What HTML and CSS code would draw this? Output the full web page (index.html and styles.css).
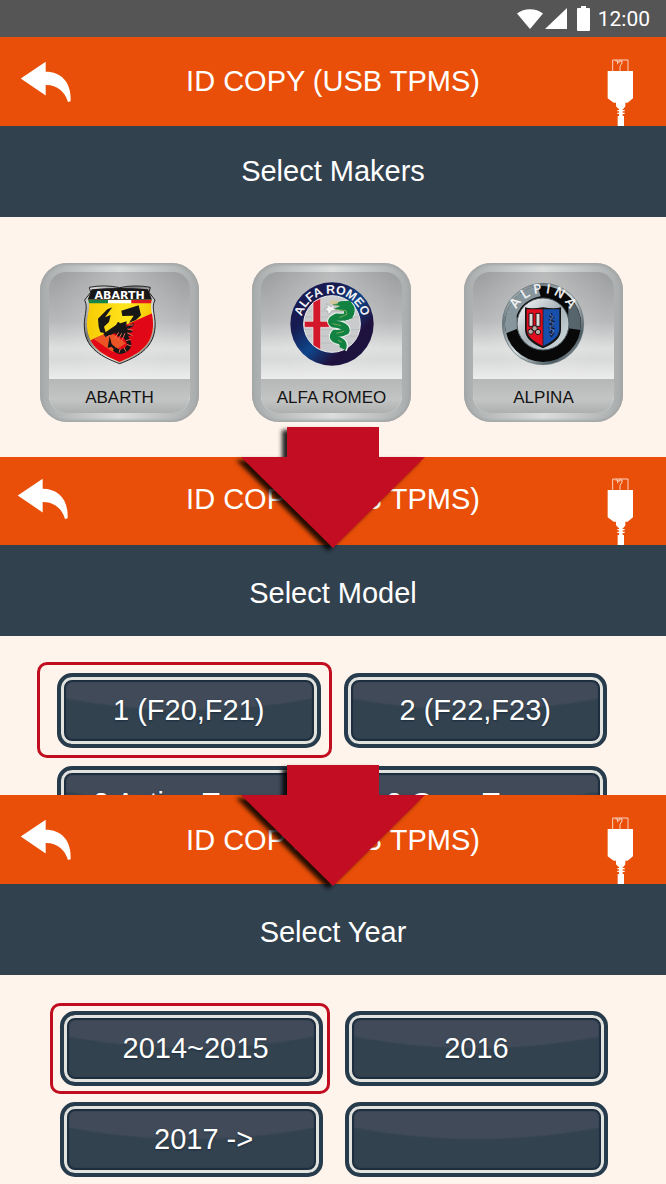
FILE: index.html
```html
<!DOCTYPE html>
<html lang="en">
<head>
<meta charset="utf-8">
<meta name="viewport" content="width=device-width, initial-scale=1">
<title>ID COPY (USB TPMS)</title>
<link rel="stylesheet" href="styles.css">
</head>
<body>
<svg class="defs" aria-hidden="true">
  <defs>
    <symbol id="back" viewBox="60 185 156 128">
      <path fill="#fff" d="M61 238 137 187V218C184 218 216 250 213 308L205 310C196 278 171 257 137 258V290Z"/>
    </symbol>
    <symbol id="usb" viewBox="322 178 81 201">
      <path d="M339 216V181H385V216M347 184H354V194M361 216V200L367 190V184H358V190" fill="none" stroke="#fff" stroke-opacity=".75" stroke-width="3"/>
      <path fill="#fff" d="M324 214H400V296L384 309H377V320L372 327H356L349 320V309H342L324 296Z"/>
      <path fill="#fff" d="M358 325H369V352H358ZM353 331H375V335H353ZM353 339H375V343H353ZM354 349H373V379H354Z"/>
    </symbol>
    <symbol id="down" viewBox="0 0 184 121">
      <path fill="#c30d23" d="M46 0H138V30H184L92 121 0 30H46Z"/>
    </symbol>
  </defs>
</svg>

<header class="status">
  <svg class="status__wifi" viewBox="0 0 26 20" aria-hidden="true"><path fill="#fff" d="M0 4.500C7-1.300 19-1.300 26 4.500L13 20Z"/></svg>
  <svg class="status__signal" viewBox="0 0 22 21" aria-hidden="true"><path fill="#fff" d="M22 0V21H0Z"/></svg>
  <svg class="status__battery" viewBox="0 0 13 25" aria-hidden="true"><path fill="#fff" d="M4 0H9V2H12Q13 2 13 3V24Q13 25 12 25H1Q0 25 0 24V3Q0 2 1 2H4Z"/></svg>
  <time class="status__time">12:00</time>
</header>

<main>
  <section class="panel panel--makers">
    <div class="bar">
      <button class="bar__back" aria-label="Back"><svg aria-hidden="true"><use href="#back"/></svg></button>
      <h1 class="bar__title">ID COPY (USB TPMS)</h1>
      <svg class="bar__usb" aria-hidden="true"><use href="#usb"/></svg>
    </div>
    <h2 class="subtitle">Select Makers</h2>
    <div class="tiles">
      <button class="tile">
        <span class="tile__face">
          <svg class="tile__logo" viewBox="140 84 252 252" aria-hidden="true">
            <defs>
              <linearGradient id="yellow" x2="1"><stop stop-color="#f5c800"/><stop offset=".6" stop-color="#ffe61e"/><stop offset="1" stop-color="#f3c300"/></linearGradient>
              <linearGradient id="chrome" x2="1" y2="1"><stop stop-color="#f4f4f4"/><stop offset=".35" stop-color="#777"/><stop offset=".65" stop-color="#e6e6e6"/><stop offset="1" stop-color="#555"/></linearGradient>
              <clipPath id="shield"><path d="M170 136H362C352 163 370 188 364 226C358 278 318 302 265 324C212 302 174 278 168 226C162 188 181 163 170 136Z"/></clipPath>
            </defs>
            <path fill="url(#chrome)" stroke="#222" stroke-width="3" d="M174 100Q220 91 265 101Q310 91 357 100L353 115L371 138C357 163 377 190 370 230C362 284 318 309 265 329C212 309 166 284 160 230C154 190 173 163 160 138L178 115Z"/>
            <path fill="#171717" d="M181 106Q265 98 350 106L362 137H169Z"/>
            <g clip-path="url(#shield)">
              <path fill="url(#yellow)" d="M150 137H380V340H150Z"/>
              <path fill="#e20717" d="M158 267 380 170V340H158Z"/>
              <path fill="#ed5425" d="M186 254 236 233 284 268 244 294Z"/>
              <path fill="#188548" d="M160 138H230V148H160Z"/><path fill="#fff" d="M230 138H300V148H230Z"/><path fill="#df1823" d="M300 138H375V148H300Z"/>
            </g>
            <g fill="#181717">
              <path d="M200 194 228 166 243 160 221 190 238 183 233 204 218 218 224 238 207 235 202 218Z"/>
              <path d="M270 170 322 154 329 184 314 198 293 206 307 185 273 186Z"/>
              <path d="M216 239 254 213 260 203 267 208 286 202 285 218 308 207 306 217 289 226 304 228 303 235 288 236 302 246 286 245 277 252 262 248 251 237 223 250Z"/>
            </g>
            <path fill="none" stroke="#161616" stroke-width="13" d="M278 242Q304 270 286 286Q266 301 249 284"/>
            <path fill="none" stroke="#eb6b52" stroke-width="3" d="M262 235 250 254M271 238 260 258M281 238 271 260M291 213H306M288 225 305 229M288 237 304 245M284 260 298 256M286 271 299 276M278 281 284 293M267 284 263 296M225 249 236 244"/>
            <path fill="#161616" d="M235 246 229 282 240 278 254 290 252 280 241 270Z"/>
            <text x="265" y="134" text-anchor="middle" font-size="33" fill="#fff" class="mark mark--wide mark--bold">ABARTH</text>
          </svg>
          <span class="tile__label">ABARTH</span>
        </span>
      </button>

      <button class="tile">
        <span class="tile__face">
          <svg class="tile__logo" viewBox="136 81 252 252" aria-hidden="true">
            <defs>
              <linearGradient id="navy" x2="1" y2="1"><stop stop-color="#191a50"/><stop offset=".3" stop-color="#181b52"/><stop offset=".52" stop-color="#0e468b"/><stop offset=".72" stop-color="#20113e"/><stop offset="1" stop-color="#171540"/></linearGradient>
              <path id="arcA" d="M169 223A94 94 0 1 1 355 223"/>
            </defs>
            <circle cx="262" cy="207" r="125" fill="url(#navy)"/>
            <circle cx="262" cy="207" r="85" fill="#c9cbcd" stroke="#eee" stroke-width="3"/>
            <path stroke="#b4b7ba" stroke-width="2" d="M190 168H334M181 186H343M178 224H346M187 243H337M199 264H325"/>
            <path fill="#d3182c" stroke="#e9e9e9" stroke-width="2" d="M205 142 228 130V199H254V217H228V284L205 271V217H179V199H205Z"/>
            <path fill="none" stroke="#e7efe8" stroke-width="27" stroke-linejoin="round" d="M288 151Q326 143 318 175Q308 190 276 186Q252 196 266 207Q308 211 304 229Q290 237 270 235Q258 250 281 256Q304 264 294 282"/>
            <path fill="none" stroke="#128242" stroke-width="21" stroke-linejoin="round" d="M288 151Q326 143 318 175Q308 190 276 186Q252 196 266 207Q308 211 304 229Q290 237 270 235Q258 250 281 256Q302 264 293 281"/>
            <path fill="#128242" d="M263 149 288 139 318 137 329 169 323 190 299 197 298 168 266 162 286 154Z"/>
            <path fill="none" stroke="#a7ba62" stroke-width="2" d="M267 149 284 152M270 163 304 167 307 178 284 188M264 206 289 212M275 235 298 229M280 256 292 262"/>
            <path fill="#f3f3f3" stroke="#777" stroke-width="1" d="M238 162 249 158 245 146 258 155 270 151 267 160 276 166 261 167 252 179 248 167Z"/>
            <path fill="#d6c696" d="M256 134 262 141 268 133 273 141 279 134V146H256Z"/>
            <text font-size="37" fill="#f1f2f5" class="mark mark--bold"><textPath href="#arcA" startOffset="50%" text-anchor="middle">ALFA ROMEO</textPath></text>
          </svg>
          <span class="tile__label">ALFA ROMEO</span>
        </span>
      </button>

      <button class="tile">
        <span class="tile__face">
          <svg class="tile__logo" viewBox="138 82 252 252" aria-hidden="true">
            <defs>
              <linearGradient id="steel" x2="1" y2="1"><stop stop-color="#e9f0f2"/><stop offset=".25" stop-color="#69777d"/><stop offset=".5" stop-color="#d7e1e4"/><stop offset=".8" stop-color="#4b5a61"/><stop offset="1" stop-color="#dfe5e7"/></linearGradient>
              <linearGradient id="glass" y2="1"><stop stop-color="#fff"/><stop offset=".5" stop-color="#a6b2b8"/><stop offset="1" stop-color="#d8e1e4"/></linearGradient>
              <path id="arcP" d="M172 218A90 90 0 1 1 350 218"/>
            </defs>
            <circle cx="261" cy="208" r="122" fill="url(#steel)" stroke="#59666c" stroke-width="2"/>
            <circle cx="261" cy="208" r="114" fill="#080808"/>
            <path fill="#87969d" d="M147 213A114 114 0 0 1 245 95L254 125Q199 136 182 183L184 222 150 236Z"/>
            <path fill="#56646c" d="M337 153 354 144Q378 176 374 226L336 221Z"/>
            <circle cx="261" cy="208" r="78" fill="url(#glass)" stroke="#4e5a60" stroke-width="3"/>
            <path fill="#151515" d="M207 158Q225 164 261 158Q296 164 315 158V225Q315 258 261 281Q207 258 207 225Z"/>
            <path fill="#e10d1e" d="M212 164H260V274Q212 251 212 224Z"/>
            <path fill="#174fac" d="M262 164H310V224Q310 251 262 274Z"/>
            <path fill="#ddd" stroke="#231315" stroke-width="3" d="M219 176H231V215H219ZM240 176H252V215H240Z"/>
            <g fill="#b8aaa5" stroke="#241719" stroke-width="3"><circle cx="224" cy="231" r="8"/><circle cx="236" cy="221" r="8"/><circle cx="246" cy="232" r="8"/></g>
            <path fill="none" stroke="#171f3e" stroke-width="4" d="M287 175V248M279 184 295 190M278 195 296 201M279 207 294 211M277 219 297 222M279 232 295 236M281 244 293 239"/>
            <path fill="none" stroke="#8798b4" stroke-width="2" d="M283 179 290 187 282 198 293 208 281 220 294 229 285 242"/>
            <text font-size="38" fill="#f5f5f5" stroke="#f5f5f5" stroke-width="1" class="mark mark--wide"><textPath href="#arcP" startOffset="50%" text-anchor="middle">A L P I N A</textPath></text>
          </svg>
          <span class="tile__label">ALPINA</span>
        </span>
      </button>
    </div>
  </section>

  <section class="panel panel--model">
    <svg class="step" aria-hidden="true"><use href="#down"/></svg>
    <div class="bar">
      <button class="bar__back" aria-label="Back"><svg aria-hidden="true"><use href="#back"/></svg></button>
      <h1 class="bar__title">ID COPY (USB TPMS)</h1>
      <svg class="bar__usb" aria-hidden="true"><use href="#usb"/></svg>
    </div>
    <h2 class="subtitle">Select Model</h2>
    <div class="options">
      <button class="option option--marked">1 (F20,F21)</button>
      <button class="option">2 (F22,F23)</button>
      <button class="option">2 Active Tourer</button>
      <button class="option">2 Gran Tourer</button>
    </div>
  </section>

  <section class="panel panel--year">
    <svg class="step" aria-hidden="true"><use href="#down"/></svg>
    <div class="bar">
      <button class="bar__back" aria-label="Back"><svg aria-hidden="true"><use href="#back"/></svg></button>
      <h1 class="bar__title">ID COPY (USB TPMS)</h1>
      <svg class="bar__usb" aria-hidden="true"><use href="#usb"/></svg>
    </div>
    <h2 class="subtitle">Select Year</h2>
    <div class="options">
      <button class="option option--marked">&nbsp;2014~2015</button>
      <button class="option">2016</button>
      <button class="option">&nbsp;&nbsp;&nbsp;2017 -&gt;</button>
      <button class="option" aria-label="Empty"></button>
    </div>
  </section>
</main>
</body>
</html>
```

FILE: styles.css
```css
* { box-sizing: border-box; }

body {
  margin: 0;
  background: #fff4eb;
  color: #fff;
  font-family: "Liberation Sans", Arial, sans-serif;
}

button {
  padding: 0;
  border: 0;
  background: none;
  color: inherit;
  font: inherit;
  cursor: pointer;
}

.defs { position: absolute; width: 0; height: 0; }

.status {
  display: flex;
  align-items: center;
  justify-content: flex-end;
  height: 37px;
  padding-right: 16px;
  background: #555;
}
.status__wifi { width: 26px; height: 20px; margin-right: 2px; }
.status__signal { width: 22px; height: 21px; margin-right: 10px; }
.status__battery { width: 13px; height: 25px; margin-right: 8px; }
.status__time { font: 21px/24px Roboto, sans-serif; }

.panel { position: relative; }

.bar {
  display: grid;
  grid-template-columns: 1fr auto 1fr;
  align-items: center;
  height: 89px;
  background: #e94f08;
}
.bar__back { justify-self: start; margin-left: 20px; }
.bar__back svg { display: block; width: 52px; height: 42px; }
.bar__title { margin: 0; font-size: 29px; line-height: 36px; font-weight: 400; }
.bar__usb { align-self: end; justify-self: end; width: 27px; height: 67px; margin-right: 32px; }

.subtitle {
  display: flex;
  align-items: center;
  justify-content: center;
  height: 91px;
  margin: 0;
  background: #32414e;
  font-size: 29px;
  line-height: 36px;
  font-weight: 400;
}

.panel--makers .bar__title,
.panel--makers .subtitle { padding-bottom: 2px; }

.tiles {
  display: grid;
  grid-template-columns: repeat(3, 1fr);
  align-items: start;
  gap: 53px;
  padding: 46px 43px 35px 40px;
}
.tile {
  aspect-ratio: 1;
  padding: 9px;
  border-radius: 27px;
  background: linear-gradient(90deg, #a9acac, #dcdede 50%, #a9acac);
  box-shadow: inset 0 0 3px 2px #a3a6a6;
}
.tile__face {
  display: flex;
  flex-direction: column;
  align-items: center;
  justify-content: space-between;
  height: 100%;
  padding-top: 10px;
  border-radius: 17px;
  overflow: hidden;
  background:
    radial-gradient(ellipse at 50% 0, rgba(255, 255, 255, .3), transparent 65%),
    linear-gradient(#9c9d9e, #b8b9ba 35%, #dedfdf 54%, #d8d9d9 62%, #efefef 78%);
}
.tile__logo { width: 84px; height: 84px; }
.tile__label {
  width: 100%;
  padding-top: 4px;
  background: linear-gradient(#b6b8b8, #c3c4c4 60%, #aeb0b0);
  color: #141414;
  font-size: 17px;
  line-height: 30px;
  text-align: center;
}
.mark { font-family: "Liberation Sans", Arial, sans-serif; }
.mark--wide { font-family: "DejaVu Sans", sans-serif; }
.mark--bold { font-weight: 700; }

.step {
  position: absolute;
  z-index: 2;
  top: -30px;
  left: calc(50% - 92px);
  width: 184px;
  height: 121px;
  overflow: visible;
  filter: drop-shadow(-5px 3px 2px rgba(0, 0, 0, .85));
  pointer-events: none;
}

.options {
  display: grid;
  grid-template-columns: 1fr 1fr;
  grid-auto-rows: 75px;
}
.option {
  position: relative;
  padding-bottom: 2px;
  border: 4px solid #263b4b;
  border-radius: 15px;
  background: radial-gradient(ellipse 370px 203px at 50% -169px, #404a58 99%, #33424f 100%) padding-box #263b4b;
  box-shadow: inset 0 0 0 3px #e2e2df, inset 0 0 1px 5px #1c2d3e;
  font-size: 29px;
  line-height: 36px;
  text-shadow: 0 1px 2px #1c2d3e;
}
.option--marked::after {
  content: "";
  position: absolute;
  border: 3px solid #c00d20;
  border-radius: 10px;
}

.panel--model .bar { height: 88px; }
.panel--model .bar__back { margin-left: 17px; }
.panel--model .bar__back,
.panel--model .bar__title { padding-bottom: 4px; }
.panel--model .subtitle { padding-top: 4px; }
.panel--model .options {
  height: 159px;
  padding: 37px 59px 0 57px;
  gap: 18px 23px;
  overflow: hidden;
}
.panel--model .option--marked::after { inset: -15px -15px -14px -24px; }

.panel--year .subtitle { padding-top: 4px; }
.panel--year .options {
  padding: 36px 58px 7px 60px;
  gap: 16px 22px;
}
.panel--year .option--marked::after { inset: -12px -11px -12px -14px; }
```
